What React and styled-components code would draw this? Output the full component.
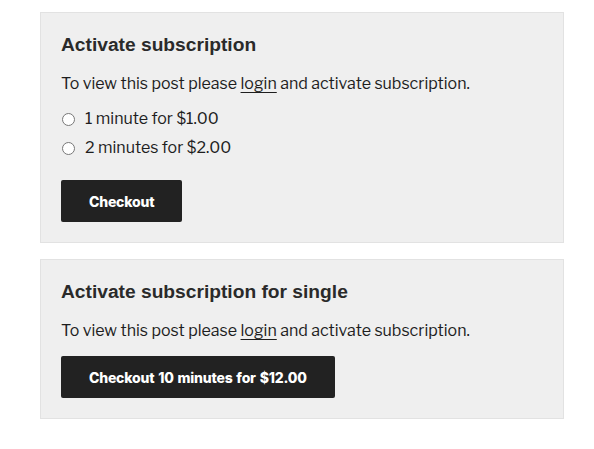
import React from 'react'
import styled, { createGlobalStyle } from 'styled-components';

const Global = createGlobalStyle`
   body {
      margin: 0;
      background: #fff;
      font-family: "Libre Franklin", "Noto Sans", sans-serif;
      color: #1e1e1e;
   }
`

const Page = styled.main`
   display: flex;
   flex-direction: column;
   gap: 16px;
   padding: 12px 30px 0 40px;
`

const Card = styled.section`
   background: #efefef;
   border: 1px solid #e2e2e2;
   padding: 19px 20px 20px;
`

const Title = styled.h2`
   margin: 0 0 14px;
   font-family: "Liberation Sans", Arial, sans-serif;
   font-weight: 700;
   font-size: 19.2px;
   line-height: 26px;
   color: #2a2a2a;
`

const Text = styled.p`
   margin: 0 0 13px;
   font-size: 16px;
   line-height: 24px;
`

const Link = styled.a`
   color: inherit;
   text-decoration: underline;
   text-underline-offset: 3px;
   text-decoration-thickness: 1px;
`

const Options = styled.div`
   display: flex;
   flex-direction: column;
   gap: 9px;
   margin-bottom: 22px;
`

const Option = styled.label`
   display: flex;
   align-items: center;
   gap: 10px;
   font-size: 16px;
   line-height: 20px;
   input { margin: 0 0 0 1px; width: 13px; height: 13px; }
`

const Button = styled.button`
   height: 42px;
   padding: 0 28px;
   border: none;
   border-radius: 2px;
   background: #222;
   color: #fff;
   font-family: Inter, sans-serif;
   font-weight: 800;
   font-size: 14px;
   letter-spacing: -0.2px;
   word-spacing: 1px;
   cursor: pointer;
`

const App = () => {
   return (
      <>
         <Global />
         <Page>
            <Card>
               <Title>Activate subscription</Title>
               <Text>To view this post please <Link href="#">login</Link> and activate subscription.</Text>
               <Options>
                  <Option><input type="radio" name="plan" />1 minute for $1.00</Option>
                  <Option><input type="radio" name="plan" />2 minutes for $2.00</Option>
               </Options>
               <Button>Checkout</Button>
            </Card>
            <Card>
               <Title>Activate subscription for single</Title>
               <Text>To view this post please <Link href="#">login</Link> and activate subscription.</Text>
               <Button>Checkout 10 minutes for $12.00</Button>
            </Card>
         </Page>
      </>
   )
}

export default App
